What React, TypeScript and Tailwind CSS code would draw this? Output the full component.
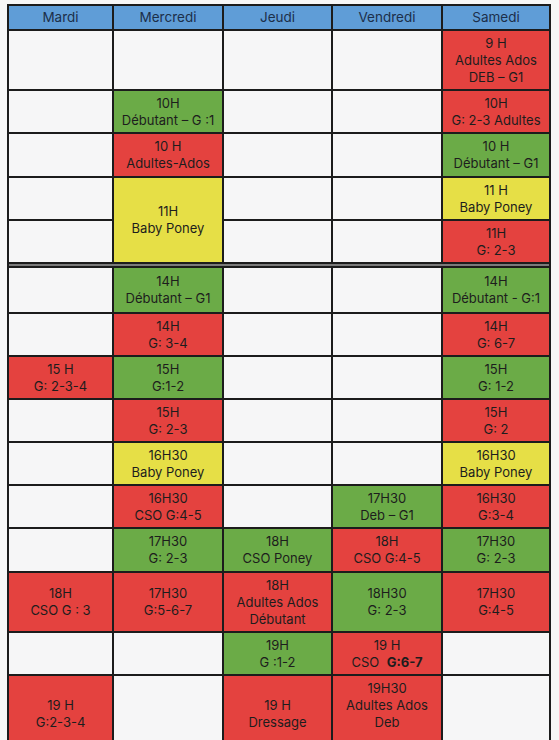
type Tone = "r" | "g" | "y" | "e";

type Cell = { tone: Tone; lines?: React.ReactNode[]; tall?: boolean };

const TONES: Record<Tone, string> = {
  r: "bg-[#e4423f]",
  g: "bg-[#6bab47]",
  y: "bg-[#e6df46]",
  e: "bg-[#f6f6f7]",
};

const E: Cell = { tone: "e" };

const DAYS = ["Mardi", "Mercredi", "Jeudi", "Vendredi", "Samedi"];

// morning block (the Mercredi 11H cell spans two rows)
const MORNING: Cell[][] = [
  [E, E, E, E, { tone: "r", lines: ["9 H", "Adultes Ados", "DEB – G1"] }],
  [E, { tone: "g", lines: ["10H", "Débutant – G :1"] }, E, E, { tone: "r", lines: ["10H", "G: 2-3 Adultes"] }],
  [E, { tone: "r", lines: ["10 H", "Adultes-Ados"] }, E, E, { tone: "g", lines: ["10 H", "Débutant – G1"] }],
  [E, { tone: "y", lines: ["11H", "Baby Poney"], tall: true }, E, E, { tone: "y", lines: ["11 H", "Baby Poney"] }],
  [E, E, E, { tone: "r", lines: ["11H", "G: 2-3"] }],
];

const AFTERNOON: Cell[][] = [
  [E, { tone: "g", lines: ["14H", "Débutant – G1"] }, E, E, { tone: "g", lines: ["14H", "Débutant - G:1"] }],
  [E, { tone: "r", lines: ["14H", "G: 3-4"] }, E, E, { tone: "r", lines: ["14H", "G: 6-7"] }],
  [
    { tone: "r", lines: ["15 H", "G: 2-3-4"] },
    { tone: "g", lines: ["15H", "G:1-2"] },
    E,
    E,
    { tone: "g", lines: ["15H", "G: 1-2"] },
  ],
  [E, { tone: "r", lines: ["15H", "G: 2-3"] }, E, E, { tone: "r", lines: ["15H", "G: 2"] }],
  [E, { tone: "y", lines: ["16H30", "Baby Poney"] }, E, E, { tone: "y", lines: ["16H30", "Baby Poney"] }],
  [
    E,
    { tone: "r", lines: ["16H30", "CSO G:4-5"] },
    E,
    { tone: "g", lines: ["17H30", "Deb – G1"] },
    { tone: "r", lines: ["16H30", "G:3-4"] },
  ],
  [
    E,
    { tone: "g", lines: ["17H30", "G: 2-3"] },
    { tone: "g", lines: ["18H", "CSO Poney"] },
    { tone: "r", lines: ["18H", "CSO G:4-5"] },
    { tone: "g", lines: ["17H30", "G: 2-3"] },
  ],
  [
    { tone: "r", lines: ["18H", "CSO G : 3"] },
    { tone: "r", lines: ["17H30", "G:5-6-7"] },
    { tone: "r", lines: ["18H", "Adultes Ados", "Débutant"] },
    { tone: "g", lines: ["18H30", "G: 2-3"] },
    { tone: "r", lines: ["17H30", "G:4-5"] },
  ],
  [
    E,
    E,
    { tone: "g", lines: ["19H", "G :1-2"] },
    {
      tone: "r",
      lines: [
        "19 H",
        <>
          CSO&nbsp;&nbsp;<b>G:6-7</b>
        </>,
      ],
    },
    E,
  ],
  [
    { tone: "r", lines: ["19 H", "G:2-3-4"] },
    E,
    { tone: "r", lines: ["19 H", "Dressage"] },
    { tone: "r", lines: ["19H30", "Adultes Ados", "Deb", "\u00a0"] },
    E,
  ],
];

function Slot({ cell }: { cell: Cell }) {
  return (
    <div
      className={`flex flex-col items-center justify-center text-center text-[13px] leading-[17px] text-[#1d1d1d] ${TONES[cell.tone]} ${
        cell.tall ? "row-span-2" : ""
      }`}
    >
      {cell.lines?.map((l, i) => (
        <span key={i} className="whitespace-nowrap">
          {l}
        </span>
      ))}
    </div>
  );
}

export default function App() {
  return (
    <div
      className="h-[740px] w-[559px] overflow-hidden bg-[#f7f7f7] pl-[7px] pt-[4px]"
      style={{ fontFamily: "Inter, 'Liberation Sans', sans-serif" }}
    >
      <div className="grid w-[544px] grid-cols-[103px_108px_107px_108px_106px] grid-rows-[23px_58px_41px_42px_41px_41px_2px_44px_41px_41px_41px_41px_41px_42px_58px_41px_76px] gap-[2px] border-2 border-[#1c1c1c] bg-[#1c1c1c]">
        {DAYS.map((d) => (
          <div
            key={d}
            className="flex items-center justify-center bg-[#5f9dd7] text-[13.5px] text-[#1c2f4a]"
          >
            {d}
          </div>
        ))}

        {MORNING.flat().map((c, i) => (
          <Slot key={`m${i}`} cell={c} />
        ))}

        {/* double rule between morning and afternoon */}
        <div className="col-span-5 bg-[#7a7a7a]" />

        {AFTERNOON.flat().map((c, i) => (
          <Slot key={`a${i}`} cell={c} />
        ))}
      </div>
    </div>
  );
}
